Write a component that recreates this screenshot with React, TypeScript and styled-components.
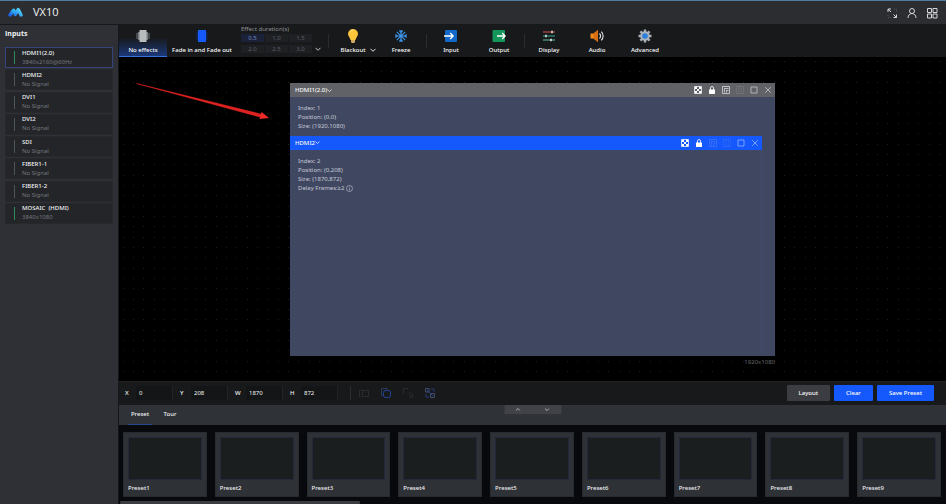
import React from "react";
import styled, { createGlobalStyle } from "styled-components";

const Global = createGlobalStyle`
  * { box-sizing: border-box; }
  html, body, #root { margin: 0; height: 100%; }
  body {
    background: #000;
    color: #e4e5e8;
    font: 6px/8px "Noto Sans", "Open Sans", sans-serif;
  }
  button, input { font: inherit; color: inherit; border: 0; padding: 0; margin: 0; background: none; }
  button { cursor: pointer; }
  svg { display: block; flex: none; }
  h1, h2, p { margin: 0; }
`;

const Page = styled.div`
  min-height: 100vh;
  display: grid;
  grid-template-rows: 24px 1fr;
  border-top: 1px solid #527ba0;
`;

const Header = styled.header`
  display: flex;
  align-items: center;
  padding: 0 8px;
  background: #2c2d31;
  border-bottom: 1px solid #17181b;
`;

const Title = styled.h1`
  flex: 1;
  margin-left: 10px;
  padding-bottom: 1px;
  font: 400 11px/14px "Open Sans", sans-serif;
  color: #f0f1f3;
`;

const HeaderActions = styled.div`
  display: flex;
  align-items: center;
  gap: 8px;
`;

const IconButton = styled.button<{ $tone?: string }>`
  display: flex;
  align-items: center;
  justify-content: center;
  color: ${(p) => p.$tone ?? "#d4d5d8"};
`;

const Body = styled.div`
  display: grid;
  grid-template-columns: 119px minmax(0, 1fr);
`;

const Sidebar = styled.aside`
  background: #2e3035;
  border-right: 1px solid #15161a;
  padding: 4px 5px 0;
`;

const SidebarTitle = styled.h2`
  font: 700 7px/10px "Open Sans", sans-serif;
  color: #f0f1f3;
`;

const SourceList = styled.ul`
  list-style: none;
  margin: 8px 0 0;
  padding: 0;
  display: grid;
  grid-auto-rows: 1fr;
  min-height: 178px;
`;

const Source = styled.button<{ $selected?: boolean }>`
  display: flex;
  align-items: center;
  gap: 7px;
  width: 100%;
  height: 21px;
  padding-left: 8px;
  text-align: left;
  background: #232529;
  border: 1px solid ${(p) => (p.$selected ? "#35457c" : "#26282c")};
`;

const Signal = styled.i<{ $live?: boolean }>`
  width: 1px;
  height: 13px;
  background: ${(p) => (p.$live ? "#2f8a5c" : "#4c5653")};
`;

const SourceName = styled.span`
  display: block;
  line-height: 9px;
  white-space: pre;
  font-weight: 500;
  color: #f0f1f3;
`;

const SourceNote = styled.span`
  display: block;
  line-height: 9px;
  color: #75777c;
`;

const Main = styled.main`
  display: grid;
  grid-template-rows: auto 1fr auto auto auto;
`;

const Toolbar = styled.div`
  display: flex;
  height: 32px;
  background: #17191b;
`;

const Tool = styled.button<{ $wide?: boolean; $active?: boolean }>`
  display: flex;
  flex-direction: column;
  align-items: center;
  gap: 2px;
  padding-top: 4px;
  width: ${(p) => (p.$wide ? "70px" : "48px")};
  white-space: nowrap;
  font-weight: 500;
  color: #fafafb;
  background: ${(p) => (p.$active ? "linear-gradient(#17191b 40%, #1c3878)" : "none")};
  border-bottom: 1px solid ${(p) => (p.$active ? "#3a6fe0" : "transparent")};
`;

const Divider = styled.i`
  align-self: center;
  width: 1px;
  height: 14px;
  margin-left: 1px;
  background: #2a2c30;
`;

const ToolLabel = styled.span<{ $menu?: boolean }>`
  display: flex;
  align-items: center;
  gap: 4px;
  padding-left: ${(p) => (p.$menu ? "10px" : "0")};
  line-height: 10px;
`;

const Durations = styled.fieldset`
  width: 90px;
  margin: 0;
  border: 0;
  padding: 0 0 0 4px;
  color: #8d8f94;
`;

const DurationTitle = styled.legend`
  padding: 0;
  line-height: 9px;
`;

const DurationRow = styled.div`
  display: grid;
  grid-template-columns: repeat(3, 23px) 10px;
  gap: 3px 1px;
`;

const Duration = styled.button<{ $active?: boolean }>`
  height: 8px;
  line-height: 8px;
  color: ${(p) => (p.$active ? "#7385ba" : "#5d5f65")};
  background: ${(p) => (p.$active ? "#1b2138" : "#1e2024")};
`;

const Canvas = styled.section`
  position: relative;
  display: flex;
  flex-direction: column;
  align-items: center;
  padding-top: 26px;
  background: #000;
  overflow: hidden;
`;

const Dots = styled.svg`
  position: absolute;
  inset: 0;
  width: 100%;
  height: 100%;
`;

const Pointer = styled.svg`
  position: absolute;
  left: 16px;
  top: 24px;
`;

const Stage = styled.div`
  position: relative;
  width: 485px;
  aspect-ratio: 1920 / 1080;
`;

const StageSize = styled.p`
  position: relative;
  width: 485px;
  padding-top: 2px;
  text-align: right;
  color: #66686d;
`;

const Layer = styled.article`
  position: absolute;
  background: #3f4761;
  box-shadow: inset -1px 0 0 #424b6c;
`;

const LayerBar = styled.header<{ $active?: boolean }>`
  display: flex;
  align-items: center;
  height: 14px;
  padding: 0 3px 0 5px;
  color: #f7f7f8;
  font-weight: 500;
  background: ${(p) => (p.$active ? "#1558fb" : "#606267")};
`;

const LayerName = styled.button`
  display: flex;
  align-items: center;
  margin-right: auto;
`;

const LayerActions = styled.div`
  display: flex;
  gap: 6px;
`;

const LayerInfo = styled.div`
  padding: 7px 8px;
  line-height: 9px;
  color: #c5c9d5;
`;

const InfoLine = styled.p`
  display: flex;
  align-items: center;
  gap: 2px;
`;

const PositionBar = styled.form`
  display: flex;
  align-items: center;
  height: 24px;
  padding: 0 12px 1px 6px;
  background: #17191a;
  border-top: 1px solid #202224;
`;

const Field = styled.label`
  display: flex;
  align-items: center;
  gap: 1px;
  margin-right: 7px;
  color: #f0f1f3;

  span { width: 10px; font-weight: 500; }
  input {
    width: 37px;
    height: 14px;
    padding-left: 3px;
    background: #131516;
    border-right: 1px solid #212325;
  }
`;

const ArrangeTools = styled.div`
  display: flex;
  align-items: center;
  gap: 12px;
  height: 14px;
  margin: 0 auto 0 5px;
  padding-left: 8px;
  border-left: 1px solid #2b2d30;
`;

const Buttons = styled.div`
  display: flex;
  gap: 4px;
`;

const Button = styled.button<{ $primary?: boolean }>`
  height: 16px;
  padding: 0 12px;
  border-radius: 1px;
  font-weight: 500;
  color: #fff;
  background: ${(p) => (p.$primary ? "#1558fb" : "#3b3d42")};
`;

const TabBar = styled.nav`
  position: relative;
  display: flex;
  height: 20px;
  padding-left: 9px;
  background: #2f3237;
`;

const Tab = styled.button<{ $active?: boolean }>`
  width: 24px;
  margin-right: 6px;
  padding-bottom: 1px;
  font-weight: 500;
  color: #f0f1f3;
  border-bottom: 1px solid ${(p) => (p.$active ? "#24478e" : "transparent")};
`;

const Handle = styled.div`
  position: absolute;
  top: 0;
  left: 50%;
  transform: translateX(-50%);
  display: grid;
  grid-template-columns: 1fr 1fr;
  width: 57px;
  height: 9px;
  background: #404247;
`;

const Presets = styled.div`
  display: grid;
  grid-template-columns: repeat(9, minmax(0, 1fr));
  gap: 8px;
  padding: 7px 5px 4px 4px;
  background: #08090d;
`;

const Preset = styled.button`
  display: block;
  height: 65px;
  padding: 4px 4px 5px;
  text-align: left;
  font-weight: 500;
  color: #eeeff1;
  background: #2e3136;
  border: 1px solid #272a2f;
`;

const Preview = styled.span`
  display: block;
  height: 43px;
  margin-bottom: 4px;
  background: #1b1e1f;
  border: 1px solid #23283a;
`;

const ScrollTrack = styled.div`
  height: 3px;
  padding-left: 1px;
  background: #08090d;
`;

const ScrollThumb = styled.div`
  width: 29%;
  height: 3px;
  border-radius: 1px;
  background: #3a3c41;
`;

const sources = [
  { name: "HDMI1(2.0)", note: "3840x2160@60Hz", live: true },
  { name: "HDMI2", note: "No Signal" },
  { name: "DVI1", note: "No Signal" },
  { name: "DVI2", note: "No Signal" },
  { name: "SDI", note: "No Signal" },
  { name: "FIBER1-1", note: "No Signal" },
  { name: "FIBER1-2", note: "No Signal" },
  { name: "MOSAIC  (HDMI)", note: "3840x1080", live: true },
];

const output = { w: 1920, h: 1080 };

const layers = [
  { name: "HDMI1(2.0)", index: 1, x: 0, y: 0, w: 1920, h: 1080 },
  { name: "HDMI2", index: 2, x: 0, y: 208, w: 1870, h: 872, delay: 2, active: true },
];

const pct = (v: number, total: number) => `${(v / total) * 100}%`;

const Chevron = ({ up, size = 5 }: { up?: boolean; size?: number }) => (
  <svg width={size} height={size} viewBox="0 0 6 6" fill="none" stroke="currentColor" strokeWidth="0.9">
    <path d={up ? "M.5 4.3 3 1.8l2.5 2.5" : "M.5 1.8 3 4.3l2.5-2.5"} />
  </svg>
);

const Logo = () => (
  <svg width="15" height="11" viewBox="0 0 15 11" fill="none" strokeLinecap="round" strokeLinejoin="round" strokeWidth="3.4">
    <defs>
      <linearGradient id="logoLeft" x1="0" y1="1" x2="1" y2="0">
        <stop offset="0" stopColor="#1c62e8" />
        <stop offset="1" stopColor="#36c4f4" />
      </linearGradient>
      <linearGradient id="logoRight" x1="0" y1="1" x2="1" y2="0">
        <stop offset="0" stopColor="#2384f0" />
        <stop offset="1" stopColor="#58dcf6" />
      </linearGradient>
    </defs>
    <path d="M2 8 5.500 3.200 7.400 6" stroke="url(#logoLeft)" />
    <path d="M7.200 7.400 10.200 2.600 13 8" stroke="url(#logoRight)" />
  </svg>
);

const ToolIcon = ({ kind }: { kind: string }) => (
  <svg width="14" height="14" viewBox="0 0 14 14" fill="none">
    {kind === "none" && (
      <>
        <path d="M0 4h14v6H0Z" fill="#46494b" />
        <path d="M2 3h10v8H2Z" fill="#7b7e80" />
        <path d="M3.500 1h7v12h-7Z" fill="#b9bbbc" />
      </>
    )}
    {kind === "fade" && (
      <>
        <path d="M1.500 3h11v8h-11Z" fill="#122552" />
        <path d="M3 1h8v12H3Z" fill="#1659fb" />
      </>
    )}
    {kind === "blackout" && (
      <>
        <path d="M7 0a5 5 0 0 0-5 5c0 2.400 2.300 3.600 2.500 6h5C9.700 8.600 12 7.400 12 5a5 5 0 0 0-5-5Z" fill="#fcc63c" />
        <path d="M4.800 2.500A3 3 0 0 1 7 1.300" stroke="#ffe9a2" />
        <path d="M5 11h4v2.200L8 14H6l-1-.8Z" fill="#d4a95d" />
      </>
    )}
    {kind === "freeze" && (
      <g stroke="#3d94e8" strokeWidth="1.200">
        <path d="M7 1v12M1 7h12M2.800 2.800l8.400 8.400M11.200 2.800l-8.400 8.400" />
        <path d="M5.300 1.500 7 3.200l1.700-1.700M5.300 12.500 7 10.800l1.700 1.700M1.500 5.300 3.200 7 1.500 8.700M12.500 5.300 10.800 7l1.700 1.700" />
      </g>
    )}
    {kind === "input" && (
      <>
        <rect x="1" y="1" width="12" height="12" rx="1" fill="#1168c9" />
        <path d="M0 7h9M6.200 4 9.200 7l-3 3" stroke="#fff" strokeWidth="1.300" />
      </>
    )}
    {kind === "output" && (
      <>
        <rect x=".5" y="1" width="12.500" height="12" rx="1" fill="#14955a" />
        <path d="M5 7h8M10.200 4l3 3-3 3" stroke="#fff" strokeWidth="1.300" />
      </>
    )}
    {kind === "display" && (
      <>
        <path d="M1 3h12" stroke="#d2574c" />
        <path d="M1 7h12" stroke="#35a98d" />
        <path d="M1 11h12" stroke="#5fbfa5" />
        <path d="M10 1.800v2.400M4 5.800v2.400M9 9.800v2.400" stroke="#f2f4f5" strokeWidth="1.400" />
      </>
    )}
    {kind === "audio" && (
      <>
        <path d="M.5 4.500h3L8 1v12L3.500 9.500h-3Z" fill="#f28a1b" />
        <path d="M3.500 4.500 8 1v12L3.500 9.500Z" fill="#d96f14" />
        <path d="M9.500 4.500a3.500 3.500 0 0 1 0 5M11.300 2.700a6 6 0 0 1 0 8.600" stroke="#e9e9ea" strokeWidth="1.100" />
      </>
    )}
    {kind === "advanced" && (
      <>
        <path d="M7 .5v13M.5 7h13M2.400 2.400l9.200 9.200M11.600 2.400l-9.200 9.200" stroke="#a9b2bb" strokeWidth="2.400" />
        <circle cx="7" cy="7" r="4.800" fill="#a9b2bb" />
        <circle cx="7" cy="7" r="2.800" fill="#2b7fdc" />
      </>
    )}
  </svg>
);

const LayerIcon = ({ kind }: { kind: string }) => (
  <svg width="8" height="8" viewBox="0 0 8 8" fill="none" stroke="currentColor" strokeWidth=".8">
    {kind === "key" && (
      <>
        <path d="M.5.500h7v7h-7Z" />
        <path d="M1 1h2v2H1ZM5 1h2v2H5ZM3 3h2v2H3ZM1 5h2v2H1ZM5 5h2v2H5Z" fill="currentColor" stroke="none" />
      </>
    )}
    {kind === "lock" && (
      <>
        <path d="M1 3.500h6V8H1Z" fill="currentColor" stroke="none" />
        <path d="M2.500 4V2a1.500 1.500 0 0 1 3 0v2" />
      </>
    )}
    {kind === "pip" && <path d="M.5.500h7v7h-7ZM2.500 6.500v-4h4M4.500 6.500v-2h2" />}
    {kind === "split" && <path d="M.5.500h7v7h-7ZM3 .5v7M5.300.500v7" strokeDasharray="1 .6" />}
    {kind === "max" && <path d="M1 1h6v6H1Z" />}
    {kind === "close" && <path d="m1.200 1.200 5.600 5.600M6.800 1.200 1.200 6.800" />}
  </svg>
);

const ArrangeIcon = ({ kind }: { kind: string }) => (
  <svg width="10" height="10" viewBox="0 0 10 10" fill="none" stroke="currentColor" strokeWidth=".9">
    {kind === "front" && <path d="M.5 2v7H2M.5 2H4M3.500 2.500h6v6h-6Z" />}
    {kind === "forward" && (
      <>
        <path d="M2 7.500H.5V.500H6V2" stroke="#2f3d66" />
        <rect x="2.500" y="2.500" width="7" height="7" rx="2" />
      </>
    )}
    {kind === "backward" && <path d="M.5 6V.5h5M7 4v5.500h2.500V6" />}
    {kind === "swap" && (
      <>
        <path d="M.5.500H4V4H.5ZM5.500 5.500h4v4h-4Z" />
        <path d="M6 1h3v3M1 6v3h3M2 2l6 6" stroke="#26428a" />
      </>
    )}
  </svg>
);

const tools = [
  { id: "blackout", label: "Blackout", menu: true, rule: true },
  { id: "freeze", label: "Freeze" },
  { id: "input", label: "Input", rule: true },
  { id: "output", label: "Output" },
  { id: "display", label: "Display", rule: true },
  { id: "audio", label: "Audio" },
  { id: "advanced", label: "Advanced" },
];

const layerActions = ["key", "lock", "pip", "split", "max", "close"];

const toneFor = (kind: string, active?: boolean) => {
  if (kind === "key" || kind === "lock") return "#ffffff";
  if (kind === "split") return active ? "#3d74f6" : "#7d7f84";
  if (kind === "pip") return active ? "#3d74f6" : "#d6d7da";
  return active ? "#8fb2ff" : "#c6c7ca";
};

const fields = [["X", 0], ["Y", 208], ["W", 1870], ["H", 872]] as const;

const arrange = [
  ["front", "#2c2e31"],
  ["forward", "#1f4aa6"],
  ["backward", "#2c2e31"],
  ["swap", "#46537a"],
];

export default function App() {
  return (
    <Page>
      <Global />
      <Header>
        <Logo />
        <Title>VX10</Title>
        <HeaderActions>
          <IconButton aria-label="Full screen">
            <svg width="12" height="12" viewBox="0 0 12 12" fill="none" stroke="currentColor">
              <path d="M2 5V2h3M2 2l3 3M10.500 7.500v3h-3M10.500 10.500l-3-3" />
              <path d="M8 2h2.500v2.500M2 8v2.500h2.500" stroke="#54565a" strokeDasharray="1 1" />
            </svg>
          </IconButton>
          <IconButton aria-label="Account">
            <svg width="12" height="12" viewBox="0 0 12 12" fill="none" stroke="currentColor">
              <circle cx="6" cy="4" r="2.500" />
              <path d="M2 11c0-2.600 1.700-4.500 4-4.500s4 1.900 4 4.500" />
            </svg>
          </IconButton>
          <IconButton aria-label="Apps">
            <svg width="12" height="12" viewBox="0 0 12 12" fill="none" stroke="currentColor">
              <path d="M1.500 1.500h4v4h-4ZM7 1.500h4v4H7ZM1.500 7h4v4h-4ZM7 7h4v4H7Z" />
            </svg>
          </IconButton>
        </HeaderActions>
      </Header>

      <Body>
        <Sidebar>
          <SidebarTitle>Inputs</SidebarTitle>
          <SourceList>
            {sources.map((s, i) => (
              <li key={s.name}>
                <Source $selected={i === 0}>
                  <Signal $live={s.live} />
                  <span>
                    <SourceName>{s.name}</SourceName>
                    <SourceNote>{s.note}</SourceNote>
                  </span>
                </Source>
              </li>
            ))}
          </SourceList>
        </Sidebar>

        <Main>
          <Toolbar>
            <Tool $active>
              <ToolIcon kind="none" />
              <ToolLabel>No effects</ToolLabel>
            </Tool>
            <Tool $wide>
              <ToolIcon kind="fade" />
              <ToolLabel>Fade in and Fade out</ToolLabel>
            </Tool>
            <Durations>
              <DurationTitle>Effect duration(s)</DurationTitle>
              <DurationRow>
                <Duration $active>0.5</Duration>
                <Duration>1.0</Duration>
                <Duration>1.5</Duration>
                <span />
                <Duration>2.0</Duration>
                <Duration>2.5</Duration>
                <Duration>3.0</Duration>
                <IconButton aria-label="More durations"><Chevron size={6} /></IconButton>
              </DurationRow>
            </Durations>
            {tools.map((t) => (
              <React.Fragment key={t.id}>
                {t.rule && <Divider />}
                <Tool>
                  <ToolIcon kind={t.id} />
                  <ToolLabel $menu={t.menu}>
                    {t.label}
                    {t.menu && <Chevron size={6} />}
                  </ToolLabel>
                </Tool>
              </React.Fragment>
            ))}
          </Toolbar>

          <Canvas>
            <Dots>
              <defs>
                <pattern id="dots" width="31" height="31" x="14" y="4" patternUnits="userSpaceOnUse">
                  {[0, 10, 21].map((x) =>
                    [0, 10, 21].map((y) => (
                      <rect key={`${x}-${y}`} x={x} y={y} width="1" height="1" fill="#1e1f22" />
                    ))
                  )}
                </pattern>
              </defs>
              <rect width="100%" height="100%" fill="url(#dots)" />
            </Dots>
            <Stage>
              {layers.map((l) => (
                <Layer
                  key={l.name}
                  style={{
                    left: pct(l.x, output.w),
                    top: pct(l.y, output.h),
                    width: pct(l.w, output.w),
                    height: pct(l.h, output.h),
                  }}
                >
                  <LayerBar $active={l.active}>
                    <LayerName>
                      {l.name}
                      <Chevron />
                    </LayerName>
                    <LayerActions>
                      {layerActions.map((a) => (
                        <IconButton key={a} aria-label={a} $tone={toneFor(a, l.active)}>
                          <LayerIcon kind={a} />
                        </IconButton>
                      ))}
                    </LayerActions>
                  </LayerBar>
                  <LayerInfo>
                    <InfoLine>Index: {l.index}</InfoLine>
                    <InfoLine>{`Position: (${l.x},${l.y})`}</InfoLine>
                    <InfoLine>{`Size: (${l.w},${l.h})`}</InfoLine>
                    {l.delay && (
                      <InfoLine>
                        {`Delay Frames:≥${l.delay}`}
                        <svg width="7" height="7" viewBox="0 0 7 7" fill="none" stroke="currentColor" strokeWidth=".6">
                          <circle cx="3.500" cy="3.500" r="3" />
                          <path d="M3.500 3v2.300M3.500 1.700v.7" />
                        </svg>
                      </InfoLine>
                    )}
                  </LayerInfo>
                </Layer>
              ))}
            </Stage>
            <StageSize>1920x1080</StageSize>
            <Pointer width="136" height="42" viewBox="0 0 136 42">
              <path d="M1.500 2.500 125.500 36.200l1-3Z" fill="#e02320" stroke="#e02320" strokeWidth=".5" />
              <path d="M134 37 124.500 38l2-7Z" fill="#ee2b28" />
            </Pointer>
          </Canvas>

          <PositionBar>
            {fields.map(([name, value]) => (
              <Field key={name}>
                <span>{name}</span>
                <input type="text" defaultValue={value} />
              </Field>
            ))}
            <ArrangeTools>
              {arrange.map(([kind, tone]) => (
                <IconButton key={kind} type="button" aria-label={kind} $tone={tone}>
                  <ArrangeIcon kind={kind} />
                </IconButton>
              ))}
            </ArrangeTools>
            <Buttons>
              <Button type="button">Layout</Button>
              <Button type="button" $primary>Clear</Button>
              <Button type="button" $primary>Save Preset</Button>
            </Buttons>
          </PositionBar>

          <TabBar>
            <Tab $active>Preset</Tab>
            <Tab>Tour</Tab>
            <Handle>
              <IconButton aria-label="Expand"><Chevron up /></IconButton>
              <IconButton aria-label="Collapse"><Chevron /></IconButton>
            </Handle>
          </TabBar>

          <Presets>
            {Array.from({ length: 9 }, (_, i) => (
              <Preset key={i}>
                <Preview />
                Preset{i + 1}
              </Preset>
            ))}
          </Presets>
          <ScrollTrack>
            <ScrollThumb />
          </ScrollTrack>
        </Main>
      </Body>
    </Page>
  );
}
